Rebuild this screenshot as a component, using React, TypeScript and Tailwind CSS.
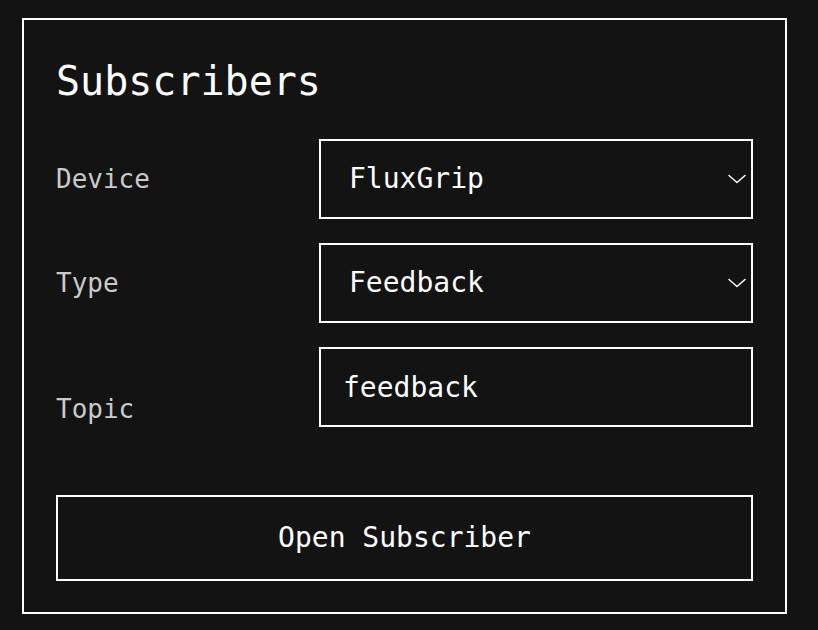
const mono = "font-['DejaVu_Sans_Mono',monospace]";

function Chevron() {
  return (
    <svg width="18" height="10" viewBox="0 0 18 10" fill="none" className="mr-[5px] shrink-0">
      <path d="M1 1.5 L9 8.5 L17 1.5" stroke="white" strokeWidth="1.5" strokeLinecap="round" strokeLinejoin="round" />
    </svg>
  );
}

function SelectField({ value, options }: { value: string; options: string[] }) {
  return (
    <div className="flex h-[80px] flex-1 items-center border-2 border-white">
      <select
        defaultValue={value}
        className={`${mono} h-full flex-1 appearance-none bg-transparent pl-[28px] text-[28px] text-white outline-none`}
      >
        {options.map((o) => (
          <option key={o} value={o} className="bg-[#131313]">
            {o}
          </option>
        ))}
      </select>
      <Chevron />
    </div>
  );
}

export default function App() {
  return (
    <div className={`${mono} h-[630px] w-[818px] bg-[#131313] pl-[22px] pt-[18px]`}>
      <div className="h-[596px] w-[765px] border-2 border-white px-8 pt-[37px]">
        <h1 className="text-[40px] leading-[48px] text-white">Subscribers</h1>

        <div className="mt-[34px] flex flex-col gap-6">
          <div className="flex items-center">
            <label className="w-[263px] text-[26px] text-[#cacaca]">Device</label>
            <SelectField value="FluxGrip" options={['FluxGrip', 'NovaPad', 'ArcBand']} />
          </div>
          <div className="flex items-center">
            <label className="w-[263px] text-[26px] text-[#cacaca]">Type</label>
            <SelectField value="Feedback" options={['Feedback', 'Telemetry', 'Status']} />
          </div>
          <div className="flex items-start">
            <label className="w-[263px] pt-[43px] text-[26px] text-[#cacaca]">Topic</label>
            <input
              defaultValue="feedback"
              className={`${mono} h-[80px] flex-1 border-2 border-white bg-transparent px-[22px] text-[28px] text-white outline-none`}
            />
          </div>
        </div>

        <button className="mt-[66px] h-[86px] w-full border-2 border-white text-[28px] text-white">
          Open Subscriber
        </button>
      </div>
    </div>
  );
}
